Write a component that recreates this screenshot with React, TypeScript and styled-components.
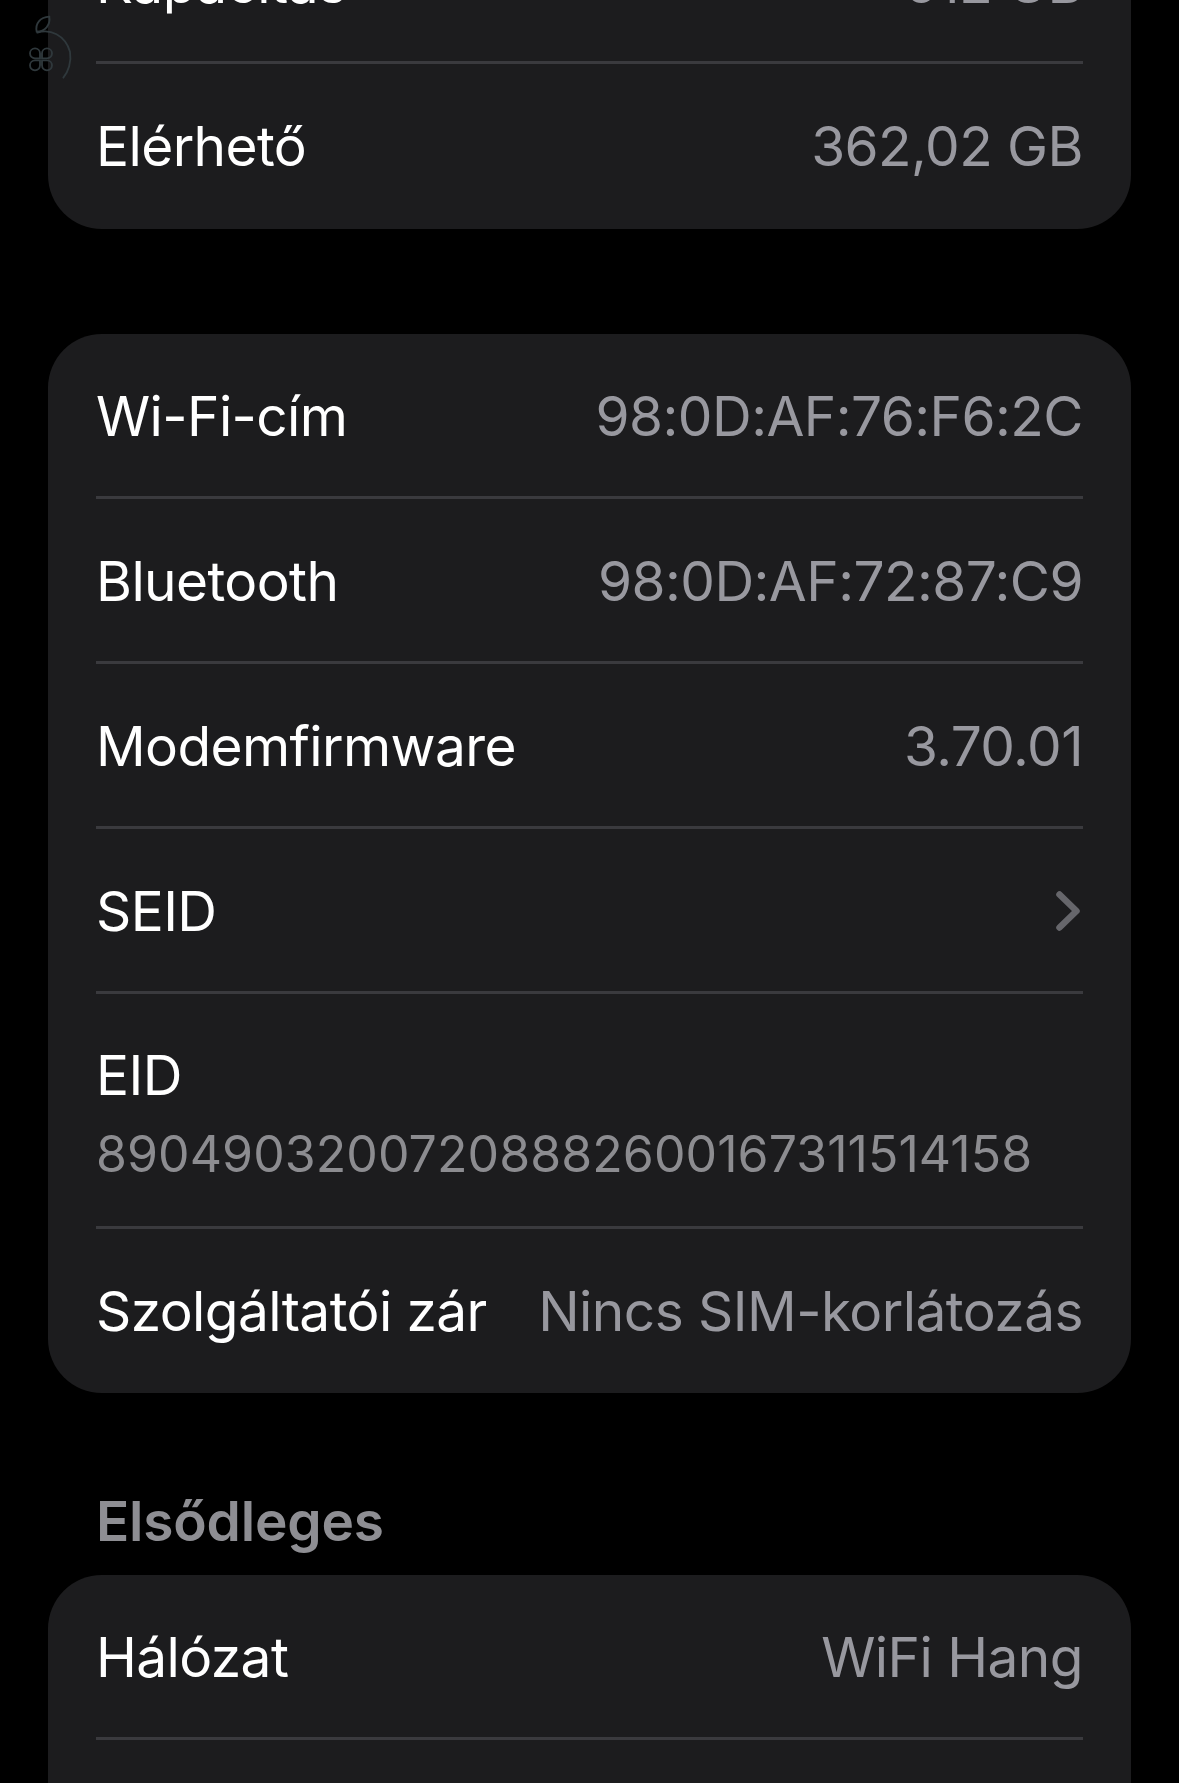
import React from 'react';
import styled, { createGlobalStyle } from 'styled-components';

const Global = createGlobalStyle`
  html, body { margin: 0; padding: 0; background: #000; }
  body { font-family: Inter, "Liberation Sans", sans-serif; -webkit-font-smoothing: antialiased; }
`;
const Screen = styled.div`
  position: relative;
  width: 1179px;
  height: 1783px;
  overflow: hidden;
  background: #000;
  box-sizing: border-box;
  padding: 0 48px;
`;
const Scroller = styled.div`
  margin-top: -101px;
  display: flex;
  flex-direction: column;
`;
const Card = styled.section<{ $after?: number }>`
  background: #1c1c1e;
  border-radius: 54px;
  padding: 0 48px;
  margin-bottom: ${p => p.$after ?? 0}px;
`;
const Row = styled.div<{ $h?: number; $pt?: number; $pb?: number }>`
  display: flex;
  align-items: center;
  justify-content: space-between;
  height: ${p => p.$h ?? 162}px;
  padding-top: ${p => p.$pt ?? 2}px;
  padding-bottom: ${p => p.$pb ?? 0}px;
  box-sizing: border-box;
`;
const Divider = styled.div`
  height: 3px;
  background: #3a3a3e;
`;
const Label = styled.span`
  color: #fff;
  font-size: 55px;
  line-height: 62px;
  letter-spacing: -0.6px;
  white-space: nowrap;
`;
const Value = styled.span`
  color: #98989f;
  font-size: 55px;
  line-height: 62px;
  letter-spacing: -0.55px;
  white-space: nowrap;
`;
const StackRow = styled.div`
  display: flex;
  flex-direction: column;
  height: 232px;
  padding-top: 50px;
  box-sizing: border-box;
  gap: 17px;
`;
const SubValue = styled.span`
  color: #8c8c90;
  font-size: 50px;
  line-height: 62px;
  letter-spacing: 0.08px;
  white-space: nowrap;
`;
const SectionTitle = styled.h2`
  margin: 0 0 0 48px;
  height: 182px;
  padding-top: 97px;
  box-sizing: border-box;
  color: #8e8e93;
  font-size: 55px;
  line-height: 62px;
  font-weight: 600;
  letter-spacing: -0.2px;
`;
const ChevronIcon = styled.svg`
  width: 24px;
  height: 40px;
  margin-right: 3px;
`;
const Watermark = styled.svg`
  position: absolute;
  left: 20px;
  top: 10px;
  width: 70px;
  height: 75px;
`;

const Chevron = () => (
  <ChevronIcon viewBox="0 0 24 40" fill="none" aria-hidden="true">
    <path d="M3.5 3.5 L20.5 20 L3.5 36.5" stroke="#66666b" strokeWidth="6.5" strokeLinecap="round" strokeLinejoin="round" />
  </ChevronIcon>
);

export default function App() {
  return (
    <Screen>
      <Global />
      <Scroller>
        <Card $after={105}>
          <Row $pt={6}>
            <Label>Kapacitás</Label>
            <Value>512 GB</Value>
          </Row>
          <Divider />
          <Row $h={165} $pt={0} $pb={2}>
            <Label>Elérhető</Label>
            <Value>362,02 GB</Value>
          </Row>
        </Card>
        <Card>
          <Row>
            <Label>Wi-Fi-cím</Label>
            <Value>98:0D:AF:76:F6:2C</Value>
          </Row>
          <Divider />
          <Row>
            <Label>Bluetooth</Label>
            <Value>98:0D:AF:72:87:C9</Value>
          </Row>
          <Divider />
          <Row>
            <Label>Modemfirmware</Label>
            <Value>3.70.01</Value>
          </Row>
          <Divider />
          <Row>
            <Label>SEID</Label>
            <Chevron />
          </Row>
          <Divider />
          <StackRow>
            <Label>EID</Label>
            <SubValue>89049032007208882600167311514158</SubValue>
          </StackRow>
          <Divider />
          <Row $h={164} $pt={0}>
            <Label>Szolgáltatói zár</Label>
            <Value>Nincs SIM-korlátozás</Value>
          </Row>
        </Card>
        <SectionTitle>Elsődleges</SectionTitle>
        <Card>
          <Row>
            <Label>Hálózat</Label>
            <Value>WiFi Hang</Value>
          </Row>
          <Divider />
          <Row />
        </Card>
      </Scroller>
      <Watermark viewBox="0 0 210 225" fill="none" stroke="#2f383c" strokeWidth="5.5" aria-hidden="true">
        <path d="M50 65 C45 40 60 22 88 20 C92 45 75 65 50 65 Z" />
        <path d="M52 68 C90 55 135 75 150 125 C155 155 145 185 130 203" strokeLinecap="round" />
        <path d="M60 145 H45 a15 15 0 1 1 15 -15 Z" />
        <path d="M66 145 V130 a15 15 0 1 1 15 15 Z" />
        <path d="M60 151 V166 a15 15 0 1 1 -15 -15 Z" />
        <path d="M66 151 H81 a15 15 0 1 1 -15 15 Z" />
      </Watermark>
    </Screen>
  );
}
